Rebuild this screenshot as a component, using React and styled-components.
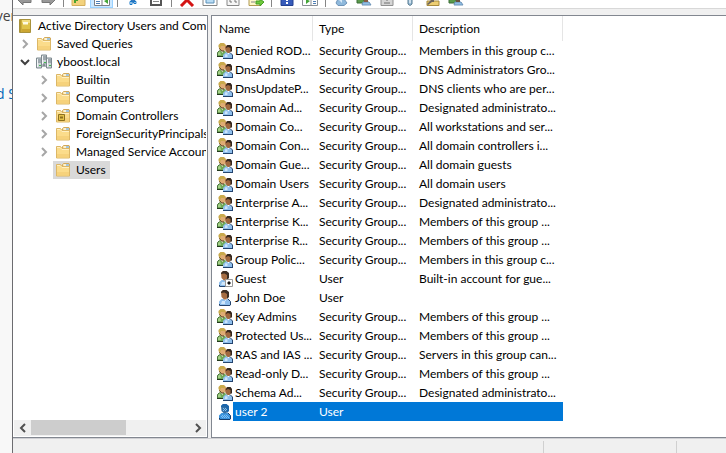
import React from "react";
import styled, { createGlobalStyle } from "styled-components";

const Global = createGlobalStyle`
  * { box-sizing: border-box; }
  html, body { margin: 0; padding: 0; background: #f7f7f7; }
  body, button { font-family: Lato, "Open Sans", sans-serif; font-size: 12px; font-variant-ligatures: none; color: #000; }
  button { border: 0; padding: 0; background: none; }
`;

const Desktop = styled.div`
  display: flex;
  height: 100vh;
  overflow: hidden;
`;

const Backdrop = styled.aside`
  flex: 0 0 12px;
  display: flex;
  flex-direction: column;
  align-items: center;
  overflow: hidden;
  background: #f8f8f8;
  padding-top: 6px;
  gap: 58px;
  font-family: "Open Sans", sans-serif;
  font-size: 14px;
  line-height: 20px;
  white-space: nowrap;
`;

const BackdropText = styled.span`
  color: #444;
`;

const BackdropLink = styled.a`
  color: #0067b8;
  text-decoration: none;
`;

const Window = styled.main`
  flex: 1;
  min-width: 0;
  display: flex;
  flex-direction: column;
  background: #f0f0f0;
  border-left: 1px solid #6c6c70;
`;

const Toolbar = styled.div`
  display: flex;
  flex: 0 0 9px;
  background: #fff;
  border-bottom: 1px solid #d8d8d8;
  overflow: hidden;
`;

const ToolButton = styled.button`
  width: 23px;
  height: 8px;
  background: ${(p) => (p.$active ? "#cce8ff" : "transparent")};
  border: solid ${(p) => (p.$active ? "#99d1ff" : "transparent")};
  border-width: 0 1px 1px;
  display: flex;
  justify-content: center;
`;

const ToolDivider = styled.span`
  width: 8px;
  height: 7px;
  background: linear-gradient(#868686, #868686) center / 1px 100% no-repeat;
`;

const Panes = styled.div`
  flex: 1;
  min-height: 0;
  display: flex;
  gap: 3px;
  padding-top: 6px;
`;

const TreePane = styled.nav`
  flex: 0 0 195px;
  min-width: 0;
  display: flex;
  flex-direction: column;
  background: #fff;
  border: 1px solid #828790;
  border-left: 0;
  padding: 1px;
`;

const TreeList = styled.ul`
  flex: 1;
  list-style: none;
  margin: 0;
  padding: 0;
  overflow: hidden;
`;

const TreeRow = styled.li`
  display: flex;
  align-items: center;
  height: 18px;
  padding-left: ${(p) => 3 + Math.max(0, p.$level - 1) * 19}px;
`;

const Expander = styled.button`
  flex: 0 0 19px;
  height: 18px;
  padding-right: 4px;
  display: flex;
  align-items: center;
  justify-content: center;
`;

const TreeItem = styled.button`
  display: flex;
  align-items: center;
  gap: 5px;
  height: 18px;
  margin-left: -2px;
  padding: 0 4px 0 2px;
  line-height: 18px;
  white-space: nowrap;
  background: ${(p) => (p.$selected ? "#d9d9d9" : "transparent")};
  svg { flex: none; }
`;

const ScrollBar = styled.div`
  display: flex;
  align-items: stretch;
  height: 16px;
  background: #f0f0f0;
`;

const ScrollArrow = styled.button`
  width: 17px;
  display: flex;
  align-items: center;
  justify-content: center;
`;

const ScrollTrack = styled.div`
  flex: 1;
  padding-bottom: 1px;
`;

const ScrollThumb = styled.div`
  width: 60%;
  height: 100%;
  background: #cdcdcd;
`;

const ListPane = styled.section`
  flex: 1;
  min-width: 0;
  background: #fff;
  border: 1px solid #828790;
  border-right: 0;
  overflow: hidden;
`;

const Table = styled.table`
  width: 351px;
  table-layout: fixed;
  border-collapse: separate;
  border-spacing: 0;
`;

const HeadCell = styled.th`
  width: ${(p) => p.$width}px;
  height: 25px;
  padding: 0 0 0 6px;
  border-right: 1px solid #e5e5e5;
  text-align: left;
  font-weight: normal;
  line-height: 18px;
  &:first-child { padding-left: 7px; }
`;

const Row = styled.tr`
  color: ${(p) => (p.$selected ? "#fff" : "#000")};
  td { background: ${(p) => (p.$selected ? "#0078d7" : "transparent")}; }
  td:first-child { background: none; }
`;

const Cell = styled.td`
  height: 19px;
  padding: 0 0 0 6px;
  line-height: 19px;
  white-space: nowrap;
`;

const NameCell = styled(Cell)`
  padding-left: 5px;
`;

const NameLine = styled.div`
  display: flex;
  align-items: center;
  svg { flex: none; }
`;

const NameText = styled.span`
  flex: 1;
  padding-left: 2px;
  height: 19px;
  background: ${(p) => (p.$selected ? "#0078d7" : "transparent")};
`;

const StatusBar = styled.footer`
  flex: 0 0 15px;
  display: flex;
  padding-top: 2px;
  border-top: 1px solid #d0d0d4;
`;

const StatusPart = styled.span`
  flex: ${(p) => p.$flex};
  border-right: ${(p) => (p.$last ? "0" : "1px solid #d0d0d0")};
`;

const FolderIcon = ({ badge }) => (
  <svg width="16" height="16" viewBox="0 0 16 16" aria-hidden="true">
    <path d="M7.500 5V2.500L8.500 1.500H14L14.500 2V5" fill="#f7e2a6" stroke="#d2a95a" />
    <path d="M9 3h5" stroke="#fff" />
    <path d="M11 3h3" stroke="#4d9be6" />
    <path d="M1.500 2.500h4l1.500 2h7.500v9.500h-13z" fill="#fbdc8b" stroke="#dcb766" />
    <path d="M2 3.500h3l2 2h7" stroke="#fff0c4" fill="none" />
    <path d="M2 10h12v3.500H2z" fill="#f6d27c" />
    {badge && (
      <>
        <path d="M3.500 6.500h6v6h-6z" fill="#e4c24a" stroke="#8d701f" />
        <path d="M5 8.500h3v2h-3z" fill="#8d701f" />
      </>
    )}
  </svg>
);

const ConsoleIcon = () => (
  <svg width="16" height="16" viewBox="0 0 16 16" aria-hidden="true">
    <path d="M2.500 1.500h11v13h-11z" fill="#e0c34a" stroke="#a8923c" />
    <path d="M3 2h1.500v12H3z" fill="#b8992f" />
    <path d="M5 2h8v3H5z" fill="#f2dd82" />
    <path d="M6 4h5v2.500H6z" fill="#fffbe6" />
    <path d="M5 11h8v3H5z" fill="#cca632" />
  </svg>
);

const DomainIcon = () => (
  <svg width="16" height="16" viewBox="0 0 16 16" aria-hidden="true">
    <path d="M5.500 1h5v9h-5zM.500 4h5v10h-5zM10.500 4h5v10h-5z" fill="#cdd4d8" stroke="#7d898f" />
    <path d="M7 3h3M7 5h3M2 6h3M2 8h3M12 6h3M12 8h3" stroke="#6f7b82" />
    <path d="M6 2h1v8H6zM1 5h1v8H1zM11 5h1v8h-1z" fill="#f4f7f8" />
    <path d="M8 8h2v1H8zM3 11h2v1H3zM13 11h2v1h-2z" fill="#3fba4b" />
    <path d="M6 12h4M8 10v2" stroke="#596970" />
  </svg>
);

const GroupIcon = () => (
  <svg width="16" height="16" viewBox="0 0 16 16" aria-hidden="true">
    <path d="M.500 13.500v-4L2.500 7.500h5l2 2v4z" fill="#6fa857" />
    <path d="M1 12v-2l2-1.500L4 12z" fill="#a5d088" />
    <path d="M0 13.500h8" stroke="#22381d" />
    <path d="M.500 13v-3.500L2.500 7.500" stroke="#47703a" fill="none" />
    <path d="M4 8l1.500 2 1-2z" fill="#f7f3e2" />
    <path d="M2 2l2-2h3l2 2v4L7 8H4.500L2 6z" fill="#dfac74" />
    <path d="M1.500 4V2l2-2h3l2 2v1.500L6 3H4L3 6z" fill="#c9aa4c" />
    <path d="M2.500 5.500L4.500 8H7" stroke="#4a3619" fill="none" />
    <path d="M6 15v-3l2.500-2.500h4.500L15.500 12v3z" fill="#8fbfec" />
    <path d="M7.500 14l1-3 2 .5V14z" fill="#cfe6fa" />
    <path d="M6 15.500h10M15.500 15v-3l-2-2" stroke="#24446f" fill="none" />
    <path d="M10 9.500l1.500 2 1-2z" fill="#fff" />
    <path d="M8 4l2-2h3l1.500 2v3.500L12.500 10h-2L8.500 8z" fill="#9f683f" />
    <path d="M9 5V4l1.500-2h3L15 4v4l-1.500 1.500V5L11 4z" fill="#33271f" />
  </svg>
);

const UserIcon = ({ guest, selected }) => (
  <svg width="16" height="16" viewBox="0 0 16 16" aria-hidden="true">
    <path d="M2 15v-3.500L4.500 9h6l3 2.500V15z" fill={selected ? "#3c93dc" : "#8fbfec"} />
    <path d="M2.500 14v1.500H13l.5-.5v-3.500L11 9" stroke={selected ? "#153d6c" : "#24446f"} fill="none" />
    {!selected && <path d="M4 14l1-3h3v3z" fill="#cfe6fa" />}
    <path d="M7 9l1.500 2 1-2z" fill={selected ? "#5aa9e8" : "#fff"} />
    <path d="M4 2l2-2h3l2 2v5L9 9.500H7L4.500 7z" fill={selected ? "#356fa3" : "#a66d43"} />
    <path d="M4 3V2l2-2h3.500L12 2v5l-2 2V4L7.500 2.500z" fill={selected ? "#1b65ab" : "#3d2e24"} />
    {selected && (
      <path d="M6 4.500h1M8 4.500h1M7 5.500h1M9 5.500h1M6 6.500h1M8 6.500h1M5 11.500h1M7 11.500h1M9 11.500h1M4 12.500h1M6 12.500h1M8 12.500h1M10 12.500h1M5 13.500h1M7 13.500h1M9 13.500h1M11 13.500h1" stroke="#7fc0f5" />
    )}
    {guest && (
      <>
        <path d="M8.500 8.500h7v7h-7z" fill="#fff" stroke="#999" />
        <path d="M12 10v4M10 12h4" stroke="#111" />
        <path d="M11 11h2v2h-2z" fill="#111" />
      </>
    )}
  </svg>
);

const Chevron = ({ open }) => (
  <svg width="10" height="10" viewBox="0 0 10 10" fill="none" aria-hidden="true">
    <path d={open ? "M1 3l4 4 4-4" : "M3 1l4 4-4 4"} stroke={open ? "#404040" : "#a6a6a6"} strokeWidth="2" />
  </svg>
);

const ScrollGlyph = ({ right }) => (
  <svg width="8" height="10" viewBox="0 0 8 10" fill="none" aria-hidden="true">
    <path d={right ? "M2 1l4 4-4 4" : "M6 1L2 5l4 4"} stroke="#505050" strokeWidth="2" />
  </svg>
);

const toolDrawings = {
  Back: <><path d="M1 0l5 5V2.500h8V0" fill="#999" stroke="#777" /></>,
  Forward: <><path d="M15 0l-5 5V2.500H2V0" fill="#999" stroke="#777" /></>,
  "Up one level": <><path d="M1-1h13v6.500H1z" fill="#f3d27d" stroke="#d4ae5c" /><path d="M3 0h4v1H5v2H3z" fill="#4da32f" /></>,
  "Show console tree": <><path d="M.500-1h15v6.500H.500z" fill="#fff" stroke="#7a7f86" /><path d="M8 0v5" stroke="#7a7f86" /><path d="M2 1.500h4M2 3.500h4" stroke="#4f7fb5" /><path d="M10 1l4-2v5z" fill="#43a536" /></>,
  Cut: <><path d="M6 0l4 3M10 0L7 2" stroke="#2d76bd" strokeWidth="2" /><path d="M5 1.500h2v3H5zM9 1.500h2v2H9z" fill="#fff" stroke="#1679c9" /></>,
  Delete: <><path d="M2 6l6-6 6 6" fill="none" stroke="#d41414" strokeWidth="3" /></>,
  Copy: <><path d="M3-1h10v6H3z" fill="#fff" stroke="#555" strokeWidth="2" /><path d="M5 1.500h6" stroke="#888" /></>,
  Properties: <><path d="M1-1h14v6.500H1z" fill="#fff" stroke="#858585" /><path d="M4-1h8v4H4z" fill="#b9dcf4" stroke="#5c91b8" /></>,
  Refresh: <><path d="M2-1h12v6.500H2z" fill="#f6f6f6" stroke="#888" /><path d="M5 0v2h2M11 3V1H9" stroke="#777" fill="none" /></>,
  "Export list": <><path d="M1-1h12v6.500H1z" fill="#fff7ca" stroke="#b09950" /><path d="M3 2h4" stroke="#888" /><path d="M8 1h4v-2l4 3-4 4V4H8z" fill="#6fc93c" stroke="#459d27" /></>,
  Help: <><path d="M2-1h12v6.500H2z" fill="#365bba" stroke="#213f90" /><path d="M7 0h2v1H7zM7 2h2v2H7z" fill="#fff" /></>,
  "Show action pane": <><path d="M.500-1h15v6.500H.500z" fill="#fff" stroke="#8a8f95" /><path d="M9 0v5" stroke="#8a8f95" /><path d="M4-1l4 2-4 3z" fill="#43a536" /><path d="M11 1.500h3M11 3.500h3" stroke="#4f7fb5" /></>,
  "New user": <><path d="M3 3l2-4h6l3 4-3 2.500H5z" fill="#8fb9dc" stroke="#6d93b8" /><path d="M6 0h3v3z" fill="#d7e9f8" /></>,
  "New group": <><path d="M1-1h6l2 4H1z" fill="#5a9a4b" stroke="#3b6c36" /><path d="M6 5l1-3h6l2 3z" fill="#90bfe5" stroke="#6d93b8" /><path d="M8-1h4v3H8z" fill="#875c43" /></>,
  "New organizational unit": <><path d="M2-1h12v6.500H2z" fill="#d5d5d5" stroke="#909090" /><path d="M5 3h6M8 0v1" stroke="#707070" /></>,
  Filter: <><path d="M6-1h4v5L8 5.500 6 4z" fill="#9cbfd9" stroke="#54798f" /><path d="M8 0v3" stroke="#fff" /></>,
  Find: <><path d="M2 1h12v4.500H2z" fill="#edce73" stroke="#a88b3d" /><path d="M2 4l4-4h3v2H7L3 5" fill="#6d655b" /></>,
  "Add to group": <><path d="M1-1h6l2 4H1z" fill="#5a9a4b" stroke="#3b6c36" /><path d="M6 5l1-3h6l2 3z" fill="#90bfe5" stroke="#6d93b8" /><path d="M8-1h4v3H8z" fill="#68513c" /></>,
};

const toolGroups = [
  ["Back", "Forward"],
  ["Up one level", "Show console tree"],
  ["Cut", "Copy"],
  ["Delete", "Properties", "Refresh", "Export list"],
  ["Help", "Show action pane"],
  ["New user", "New group", "New organizational unit", "Filter", "Find", "Add to group"],
];

const tree = [
  { level: 0, label: "Active Directory Users and Computers", icon: <ConsoleIcon /> },
  { level: 1, label: "Saved Queries", icon: <FolderIcon />, expander: "closed" },
  { level: 1, label: "yboost.local", icon: <DomainIcon />, expander: "open" },
  { level: 2, label: "Builtin", icon: <FolderIcon />, expander: "closed" },
  { level: 2, label: "Computers", icon: <FolderIcon />, expander: "closed" },
  { level: 2, label: "Domain Controllers", icon: <FolderIcon badge />, expander: "closed" },
  { level: 2, label: "ForeignSecurityPrincipals", icon: <FolderIcon />, expander: "closed" },
  { level: 2, label: "Managed Service Accounts", icon: <FolderIcon />, expander: "closed" },
  { level: 2, label: "Users", icon: <FolderIcon />, expander: "none", selected: true },
];

const group = "Security Group...";
const entries = [
  ["Denied ROD...", group, "Members in this group c..."],
  ["DnsAdmins", group, "DNS Administrators Gro..."],
  ["DnsUpdateP...", group, "DNS clients who are per..."],
  ["Domain Ad...", group, "Designated administrato..."],
  ["Domain Co...", group, "All workstations and ser..."],
  ["Domain Con...", group, "All domain controllers i..."],
  ["Domain Gue...", group, "All domain guests"],
  ["Domain Users", group, "All domain users"],
  ["Enterprise A...", group, "Designated administrato..."],
  ["Enterprise K...", group, "Members of this group ..."],
  ["Enterprise R...", group, "Members of this group ..."],
  ["Group Polic...", group, "Members in this group c..."],
  ["Guest", "User", "Built-in account for gue..."],
  ["John Doe", "User", ""],
  ["Key Admins", group, "Members of this group ..."],
  ["Protected Us...", group, "Members of this group ..."],
  ["RAS and IAS ...", group, "Servers in this group can..."],
  ["Read-only D...", group, "Members of this group ..."],
  ["Schema Ad...", group, "Designated administrato..."],
  ["user 2", "User", ""],
];

export default function App() {
  return (
    <Desktop>
      <Global />
      <Backdrop>
        <BackdropText>ver</BackdropText>
        <BackdropLink href="#">d S</BackdropLink>
      </Backdrop>
      <Window>
        <Toolbar role="toolbar">
          {toolGroups.map((names, i) => (
            <React.Fragment key={names[0]}>
              {i > 0 && <ToolDivider />}
              {names.map((name) => (
                <ToolButton key={name} aria-label={name} $active={name === "Show console tree"}>
                  <svg width="16" height="7" viewBox="0 0 16 7" fill="none">{toolDrawings[name]}</svg>
                </ToolButton>
              ))}
            </React.Fragment>
          ))}
        </Toolbar>
        <Panes>
          <TreePane>
            <TreeList>
              {tree.map((node) => (
                <TreeRow key={node.label} $level={node.level}>
                  {node.level > 0 && (
                    <Expander aria-label={`Expand ${node.label}`} disabled={node.expander === "none"}>
                      {node.expander !== "none" && <Chevron open={node.expander === "open"} />}
                    </Expander>
                  )}
                  <TreeItem $selected={node.selected}>
                    {node.icon}
                    {node.label}
                  </TreeItem>
                </TreeRow>
              ))}
            </TreeList>
            <ScrollBar>
              <ScrollArrow aria-label="Scroll left"><ScrollGlyph /></ScrollArrow>
              <ScrollTrack><ScrollThumb /></ScrollTrack>
              <ScrollArrow aria-label="Scroll right"><ScrollGlyph right /></ScrollArrow>
            </ScrollBar>
          </TreePane>
          <ListPane>
            <Table>
              <thead>
                <tr>
                  <HeadCell $width={101}>Name</HeadCell>
                  <HeadCell $width={100}>Type</HeadCell>
                  <HeadCell $width={150}>Description</HeadCell>
                </tr>
              </thead>
              <tbody>
                {entries.map(([name, type, description]) => {
                  const selected = name === "user 2";
                  return (
                    <Row key={name} $selected={selected}>
                      <NameCell>
                        <NameLine>
                          {type === "User" ? <UserIcon guest={name === "Guest"} selected={selected} /> : <GroupIcon />}
                          <NameText $selected={selected}>{name}</NameText>
                        </NameLine>
                      </NameCell>
                      <Cell>{type}</Cell>
                      <Cell>{description}</Cell>
                    </Row>
                  );
                })}
              </tbody>
            </Table>
          </ListPane>
        </Panes>
        <StatusBar>
          <StatusPart $flex="1" />
          <StatusPart $flex="0 0 133px" />
          <StatusPart $flex="0 0 49px" $last />
        </StatusBar>
      </Window>
    </Desktop>
  );
}
